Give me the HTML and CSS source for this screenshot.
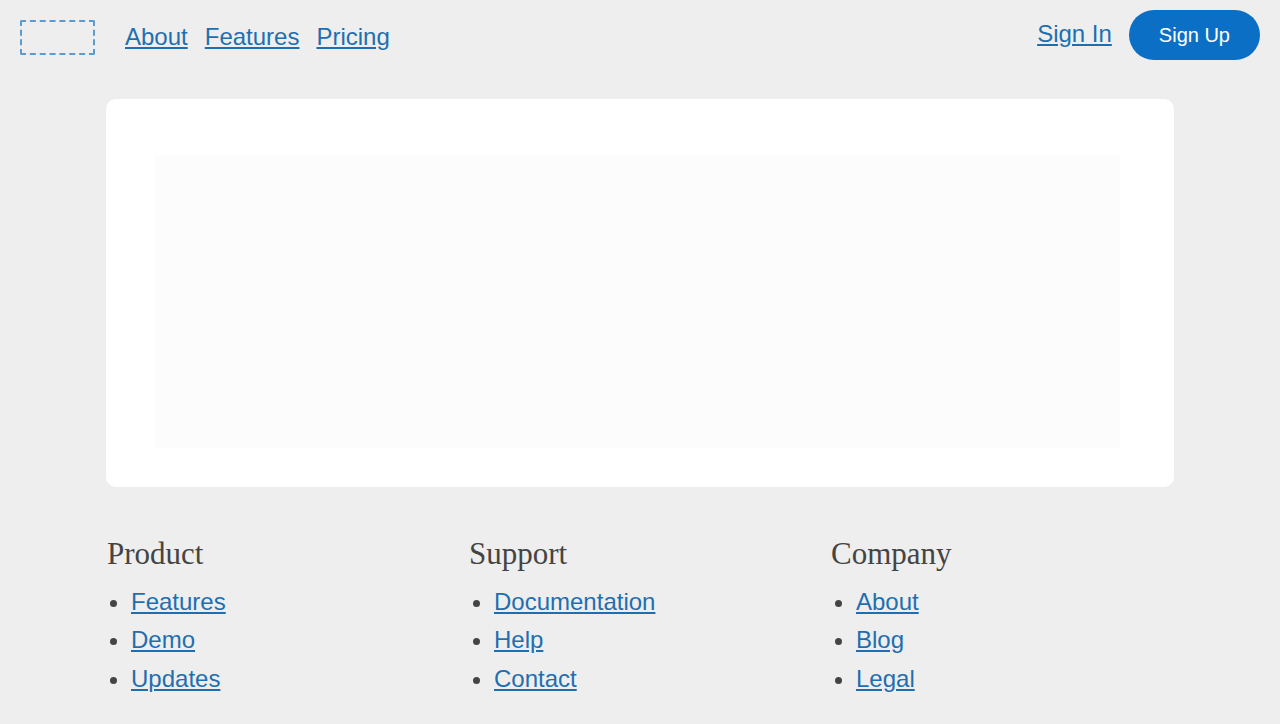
FILE: index.html
```html
<!DOCTYPE html>
<html lang="en">
<head>
<meta charset="utf-8">
<title>Site</title>
<link rel="stylesheet" href="styles.css">
</head>
<body>
<header class="topbar">
  <div class="left">
    <div class="logo" aria-label="Logo"></div>
    <nav class="nav">
      <a href="#">About</a>
      <a href="#">Features</a>
      <a href="#">Pricing</a>
    </nav>
  </div>
  <div class="right">
    <a href="#" class="signin">Sign In</a>
    <a href="#" class="signup">Sign Up</a>
  </div>
</header>
<main class="main">
  <section class="card">
    <div class="placeholder"></div>
  </section>
  <footer class="footer">
    <div class="col">
      <h3>Product</h3>
      <ul>
        <li><a href="#">Features</a></li>
        <li><a href="#">Demo</a></li>
        <li><a href="#">Updates</a></li>
      </ul>
    </div>
    <div class="col">
      <h3>Support</h3>
      <ul>
        <li><a href="#">Documentation</a></li>
        <li><a href="#">Help</a></li>
        <li><a href="#">Contact</a></li>
      </ul>
    </div>
    <div class="col">
      <h3>Company</h3>
      <ul>
        <li><a href="#">About</a></li>
        <li><a href="#">Blog</a></li>
        <li><a href="#">Legal</a></li>
      </ul>
    </div>
  </footer>
</main>
</body>
</html>
```
FILE: styles.css
```css
html, body {
  margin: 0;
  padding: 0;
}
body {
  background: #eeeeee;
  font-family: "Liberation Sans", Arial, sans-serif;
  color: #444444;
}
a {
  color: #1f6fb0;
  text-decoration: underline;
}
.topbar {
  display: flex;
  justify-content: space-between;
  align-items: center;
  padding: 10px 20px 0 20px;
  height: 50px;
}
.left {
  display: flex;
  align-items: center;
  padding-top: 4px;
}
.logo {
  width: 71px;
  height: 31px;
  border: 2px dashed #5b9bd0;
  border-radius: 2px;
}
.nav {
  display: flex;
  gap: 17px;
  margin-left: 30px;
}
.nav a, .signin {
  font-size: 24px;
  line-height: 28px;
}
.right {
  display: flex;
  align-items: center;
  gap: 17px;
}
.signin {
  margin-top: -3px;
}
.signup {
  display: flex;
  align-items: center;
  justify-content: center;
  height: 50px;
  padding: 0 30px;
  border-radius: 25px;
  background: #0b6fc6;
  color: #ffffff;
  font-size: 20px;
  text-decoration: none;
}
.main {
  width: 1068px;
  margin: 39px auto 0;
}
.card {
  background: #ffffff;
  border-radius: 10px;
  padding: 56px 54px 39px 49px;
}
.placeholder {
  height: 293px;
  background: #fcfcfc;
}
.footer {
  display: grid;
  grid-template-columns: repeat(3, 344px);
  column-gap: 18px;
  margin-top: 49px;
  padding-left: 1px;
}
.col h3 {
  margin: 0 0 11px;
  font-family: "Liberation Serif", "Times New Roman", serif;
  font-weight: normal;
  font-size: 31px;
  line-height: 36px;
  color: #444444;
}
.col ul {
  margin: 0;
  padding-left: 24px;
}
.col + .col ul {
  padding-left: 25px;
}
.col li {
  font-size: 24px;
  line-height: 38.4px;
  color: #444444;
}
```
